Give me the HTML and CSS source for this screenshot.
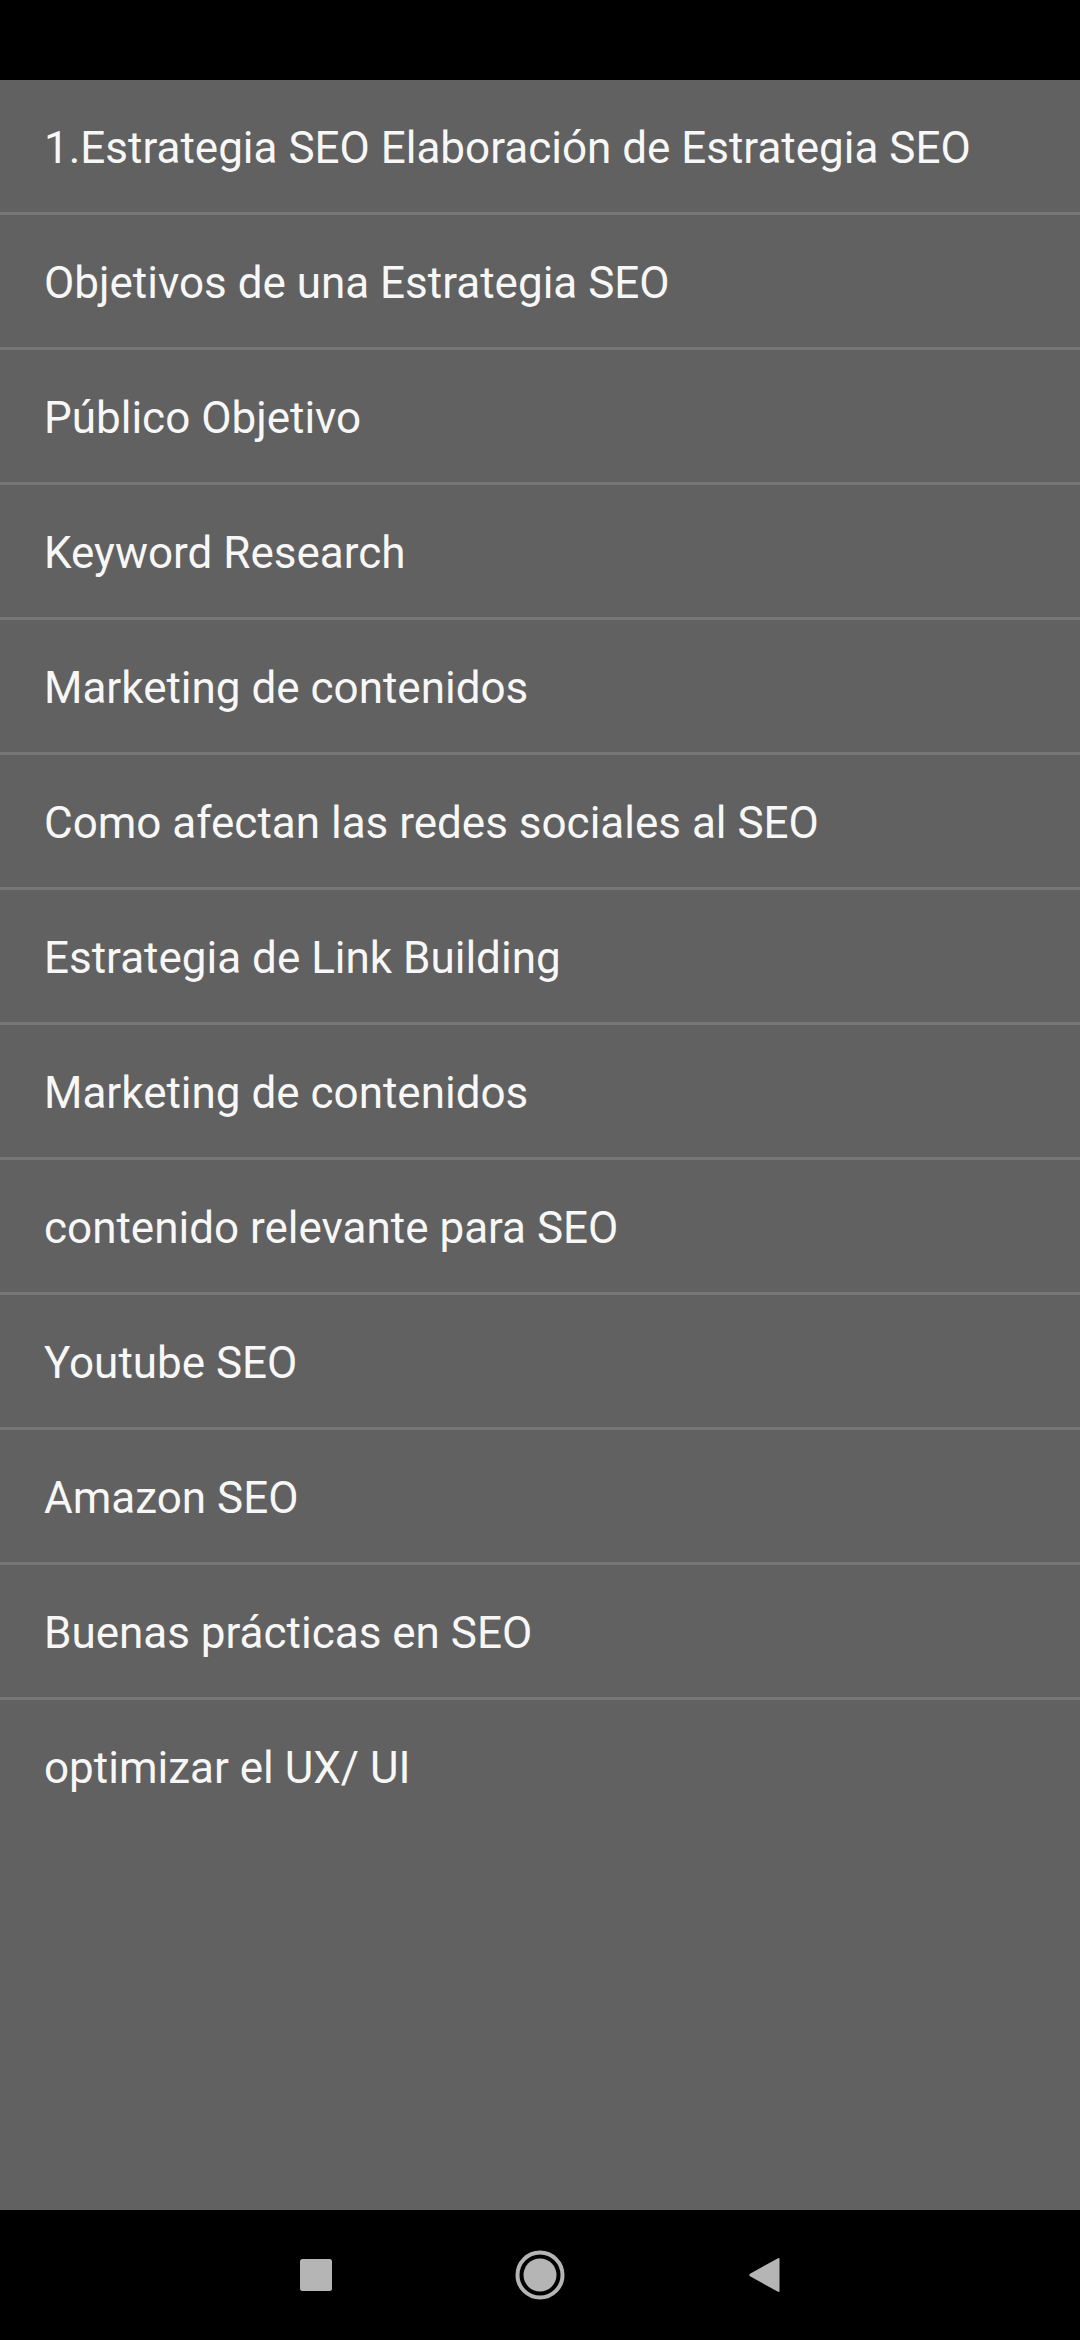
FILE: index.html
```html
<!DOCTYPE html>
<html lang="es">
<head>
    <meta charset="UTF-8">
    <meta name="viewport" content="width=device-width, initial-scale=1.0">
    <title>Estrategia SEO</title>
    <link rel="stylesheet" href="styles.css">
</head>
<body>
    <div class="status-bar"></div>

    <div class="content">
        <ul class="topic-list">
            <li class="topic-item">1.Estrategia SEO Elaboración de Estrategia SEO</li>
            <li class="topic-item">Objetivos de una Estrategia SEO</li>
            <li class="topic-item">Público Objetivo</li>
            <li class="topic-item">Keyword Research</li>
            <li class="topic-item">Marketing de contenidos</li>
            <li class="topic-item">Como afectan las redes sociales al SEO</li>
            <li class="topic-item">Estrategia de Link Building</li>
            <li class="topic-item">Marketing de contenidos</li>
            <li class="topic-item">contenido relevante para SEO</li>
            <li class="topic-item">Youtube SEO</li>
            <li class="topic-item">Amazon SEO</li>
            <li class="topic-item">Buenas prácticas en SEO</li>
            <li class="topic-item">optimizar el UX/ UI</li>
        </ul>
    </div>

    <div class="nav-bar">
        <svg class="nav-icon" width="60" height="60" viewBox="0 0 60 60">
            <rect x="14" y="14" width="32" height="32" rx="2.5" fill="#b5b5b5"/>
        </svg>
        <svg class="nav-icon" width="60" height="60" viewBox="0 0 60 60">
            <circle cx="30" cy="30" r="22.5" fill="none" stroke="#b5b5b5" stroke-width="4"/>
            <circle cx="30" cy="30" r="16.5" fill="#b5b5b5"/>
        </svg>
        <svg class="nav-icon" width="60" height="60" viewBox="0 0 60 60">
            <path d="M45.5 14 Q45.5 12.3 44 13.2 L16 28.7 Q14.5 30 16 31.3 L44 46.8 Q45.5 47.7 45.5 46 Z" fill="#b5b5b5"/>
        </svg>
    </div>
</body>
</html>
```

FILE: styles.css
```css
html, body {
    height: 100%;
}

body {
    margin: 0;
    background-color: #000;
    font-family: Roboto, "Noto Sans", Arial, sans-serif;
    display: flex;
    flex-direction: column;
    overflow: hidden;
}

.status-bar {
    height: 80px;
    flex-shrink: 0;
    background-color: #000;
}

.content {
    flex: 1;
    background-color: #616161;
}

.topic-list {
    list-style: none;
    margin: 0;
    padding: 0;
}

.topic-item {
    height: 132px;
    box-sizing: border-box;
    display: flex;
    align-items: center;
    padding: 4px 44px 0;
    color: #f7f7f7;
    font-size: 44px;
    border-bottom: 3px solid #767676;
}

.topic-item:not(:last-child) {
    height: 135px;
}

.topic-item:last-child {
    border-bottom: none;
}

.nav-bar {
    height: 130px;
    flex-shrink: 0;
    background-color: #000;
    display: flex;
    align-items: center;
    justify-content: center;
    gap: 164px;
}

.nav-icon {
    display: block;
}
```
